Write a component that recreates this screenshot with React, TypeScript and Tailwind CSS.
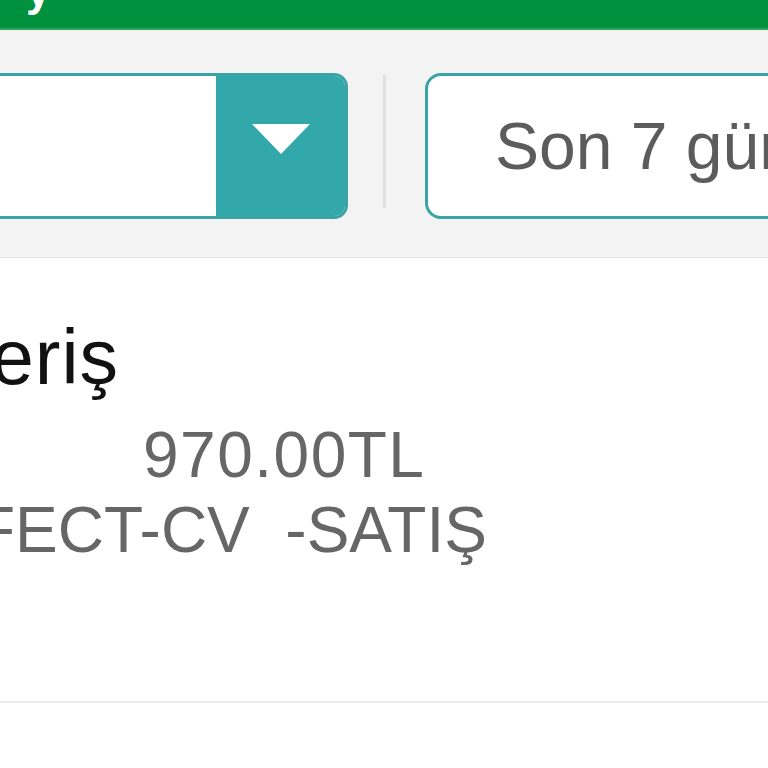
import React from "react";

const font = { fontFamily: '"Liberation Sans", Arial, Helvetica, sans-serif' };

function Header() {
  return (
    <div className="h-[30px] shrink-0 overflow-hidden bg-[#00913f] border-b-2 border-[#2ca45a]">
      <div className="-mt-[31px] pl-[26px] text-[44px] leading-none font-semibold text-white">y</div>
    </div>
  );
}

function Filters() {
  return (
    <div className="h-[228px] shrink-0 bg-[#f3f3f3] border-b border-[#e4e4e4] pt-[43px]">
      <div className="flex items-center">
        {/* category select */}
        <div className="-ml-[120px] flex h-[146px] w-[468px] shrink-0 overflow-hidden rounded-r-[14px] border-[3px] border-[#3aa3a5] bg-white">
          <div className="flex-1" />
          <div className="flex w-[129px] items-center justify-center bg-[#32a8ab] pb-[15px]">
            <svg width="58" height="30" viewBox="0 0 58 30">
              <polygon points="0,0 58,0 29,30" fill="#ffffff" />
            </svg>
          </div>
        </div>

        <div className="ml-[35px] h-[133px] w-[3px] shrink-0 -mt-[10px] bg-[#e0e0e0]" />

        {/* date range */}
        <div className="ml-[39px] flex h-[146px] w-[420px] shrink-0 items-center rounded-[16px] border-[3px] border-[#3aa3a5] bg-white pl-[67px]">
          <span className="text-[66px] leading-none text-[#5c5c5c] whitespace-nowrap">Son 7 gün</span>
        </div>
      </div>
    </div>
  );
}

function Item() {
  return (
    <div className="h-[445px] shrink-0 border-b-2 border-[#ebebeb] bg-white pt-[61px]">
      <div className="-ml-[9px] text-[77px] leading-none text-[#111111] tracking-[1px]">eriş</div>
      <div className="mt-[27px] ml-[143px] text-[64px] leading-none text-[#666666] tracking-[1.5px]">970.00TL</div>
      <div className="mt-[11px] -ml-[24px] text-[64px] leading-none text-[#666666] whitespace-pre">FECT-CV  -SATIŞ</div>
    </div>
  );
}

export default function App() {
  return (
    <div className="flex h-[768px] w-[768px] flex-col overflow-hidden bg-white" style={font}>
      <Header />
      <Filters />
      <Item />
      <div className="flex-1 bg-white" />
    </div>
  );
}
